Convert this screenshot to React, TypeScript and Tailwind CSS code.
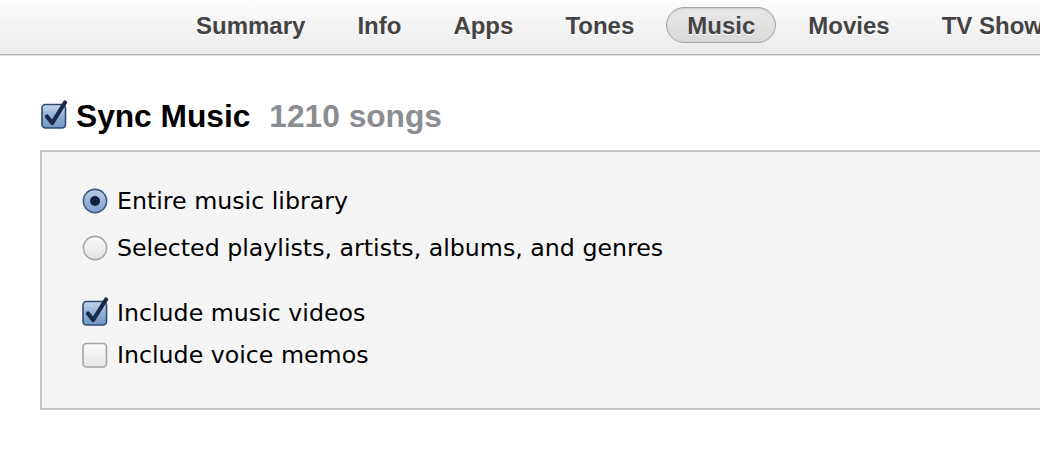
import React from "react";

const bold = { fontFamily: '"Liberation Sans", Arial, sans-serif' };
const body = { fontFamily: '"DejaVu Sans", "Liberation Sans", sans-serif' };

function CheckBox({ checked, size = 26 }: { checked: boolean; size?: number }) {
  const id = checked ? "cbOn" : "cbOff";
  return (
    <svg width={size} height={size} viewBox="0 0 26 26" className="shrink-0 overflow-visible">
      <defs>
        <linearGradient id="cbOn" x1="0" y1="0" x2="0" y2="1">
          <stop offset="0" stopColor="#c4d6ec" />
          <stop offset="0.5" stopColor="#8fb0d6" />
          <stop offset="1" stopColor="#6f96c4" />
        </linearGradient>
        <linearGradient id="cbOff" x1="0" y1="0" x2="0" y2="1">
          <stop offset="0" stopColor="#fdfdfd" />
          <stop offset="1" stopColor="#e4e4e4" />
        </linearGradient>
      </defs>
      <rect
        x="1"
        y="1.5"
        width="23.5"
        height="23.5"
        rx="3.5"
        fill={`url(#${id})`}
        stroke={checked ? "#2f4a70" : "#a3a3a3"}
        strokeWidth="1.6"
      />
      {checked && (
        <path
          d="M6 13.5 L11.2 20 L24 -0.5"
          fill="none"
          stroke="#18294a"
          strokeWidth="4.2"
          strokeLinecap="round"
          strokeLinejoin="round"
        />
      )}
    </svg>
  );
}

function Radio({ checked }: { checked: boolean }) {
  return (
    <svg width="26" height="26" viewBox="0 0 26 26" className="shrink-0">
      <defs>
        <linearGradient id="rOn" x1="0" y1="0" x2="0" y2="1">
          <stop offset="0" stopColor="#b9cde6" />
          <stop offset="1" stopColor="#7c9fcb" />
        </linearGradient>
        <linearGradient id="rOff" x1="0" y1="0" x2="0" y2="1">
          <stop offset="0" stopColor="#fafafa" />
          <stop offset="1" stopColor="#e3e3e3" />
        </linearGradient>
      </defs>
      <circle
        cx="13"
        cy="13"
        r="11.6"
        fill={checked ? "url(#rOn)" : "url(#rOff)"}
        stroke={checked ? "#3a5a86" : "#a6a6a6"}
        strokeWidth="1.6"
      />
      {checked && <circle cx="13" cy="13" r="5" fill="#13233f" />}
    </svg>
  );
}

const tabs = ["Summary", "Info", "Apps", "Tones", "Music", "Movies", "TV Shows"];

export default function App() {
  return (
    <div className="w-[1040px] h-[452px] overflow-hidden bg-white">
      <div className="h-[55px] border-b border-[#b3b3b3] bg-gradient-to-b from-[#fcfcfc] to-[#ebebeb] shadow-[0_1px_0_#e0e0e0] flex items-start pt-[7px] pl-[176px] gap-[12px] whitespace-nowrap overflow-hidden">
        {tabs.map((t) => (
          <div
            key={t}
            style={bold}
            className={
              "h-[36px] leading-[35px] rounded-full text-[24px] font-bold text-[#444444] [text-shadow:0_1px_0_#ffffff] shrink-0 " +
              (t === "Music"
                ? "px-[20px] border border-[#a7a7a7] bg-gradient-to-b from-[#e9e9e9] to-[#d9d9d9] shadow-[inset_0_1px_2px_rgba(0,0,0,0.12)]"
                : "px-[19px] border border-transparent")
            }
          >
            {t}
          </div>
        ))}
      </div>

      <div className="mt-[41px] h-[40px] flex items-center pl-[41px] whitespace-nowrap">
        <CheckBox checked size={26} />
        <span style={bold} className="ml-[9px] text-[31.7px] leading-[40px] font-bold text-black">
          Sync Music
        </span>
        <span style={bold} className="ml-[19px] text-[31.7px] leading-[40px] font-bold text-[#8a8d91]">
          1210 songs
        </span>
      </div>

      <div className="mt-[14px] ml-[40px] mr-[-20px] h-[260px] border-2 border-[#c4c4c4] bg-[#f5f5f5] pt-[29px] pl-[40px]">
        <div style={body} className="text-[23.7px] text-black whitespace-nowrap">
          <div className="h-[40px] flex items-center gap-[9px]">
            <Radio checked />
            <span className="leading-[40px]">Entire music library</span>
          </div>
          <div className="mt-[7px] h-[40px] flex items-center gap-[9px]">
            <Radio checked={false} />
            <span className="leading-[40px]">Selected playlists, artists, albums, and genres</span>
          </div>
          <div className="mt-[25px] h-[40px] flex items-center gap-[9px]">
            <CheckBox checked />
            <span className="leading-[40px]">Include music videos</span>
          </div>
          <div className="mt-[2px] h-[40px] flex items-center gap-[9px]">
            <CheckBox checked={false} />
            <span className="leading-[40px]">Include voice memos</span>
          </div>
        </div>
      </div>
    </div>
  );
}
